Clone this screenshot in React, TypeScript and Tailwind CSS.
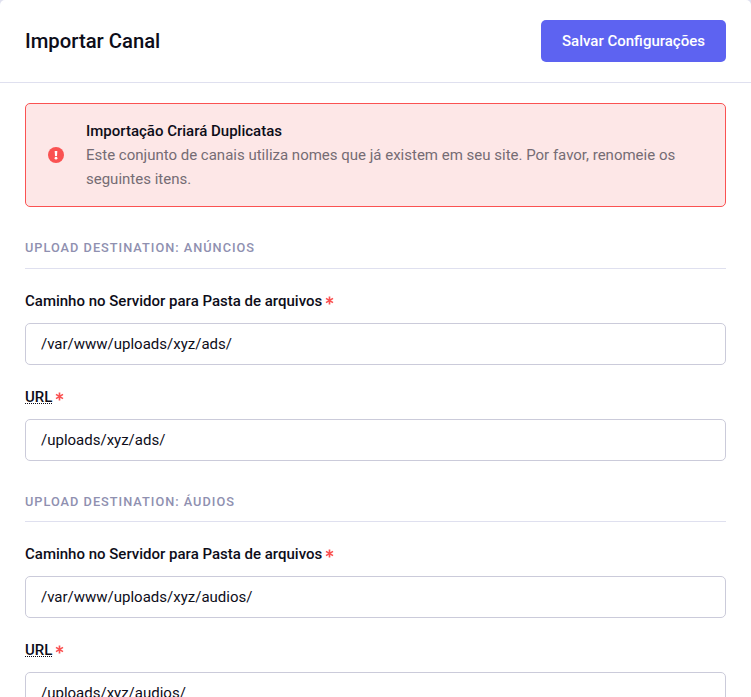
import React from "react";

function Field({ label, value, abbr }: { label: string; value: string; abbr?: boolean }) {
  return (
    <div className="flex flex-col">
      <label className="flex h-6 items-center text-[15px] font-medium leading-6 text-[#0d0d19]">
        {abbr ? (
          <abbr className="h-[14px] border-b border-dotted border-[#0d0d19] leading-[14px]">{label}</abbr>
        ) : (
          label
        )}
        <Star />
      </label>
      <input
        readOnly
        value={value}
        className="mt-[10px] h-[42px] w-full rounded-[5px] border border-[#cbcbda] bg-white px-[15px] text-[15px] text-[#0d0d19] outline-none"
      />
    </div>
  );
}

function Star() {
  return (
    <svg viewBox="0 0 9 9" className="-mt-px ml-[3px] h-[9px] w-[9px]" stroke="#fa5252" strokeWidth="1.65">
      <path d="M4.5 .6v7.8M1 2.4l7 4.2M8 2.4L1 6.6" />
    </svg>
  );
}

function Section({ title, path, url }: { title: string; path: string; url: string }) {
  return (
    <section>
      <h2 className="flex h-[41.6px] items-center border-b border-[#dfe0ef] pt-[0.8px] text-[12.75px] font-medium uppercase tracking-[1px] text-[#8f90b0]">
        {title}
      </h2>
      <div className="mt-5 flex flex-col gap-5">
        <Field label="Caminho no Servidor para Pasta de arquivos" value={path} />
        <Field label="URL" value={url} abbr />
      </div>
    </section>
  );
}

export default function App() {
  return (
    <div className="h-[697px] overflow-hidden bg-[#dfe0ef] font-[Roboto,sans-serif]">
      <div className="h-full rounded-t-[5px] bg-white">
        <header className="flex h-[83px] items-center justify-between border-b border-[#dfe0ef] px-[25px]">
          <h1 className="text-[20.25px] font-medium text-[#0d0d19]">Importar Canal</h1>
          <button className="h-[42px] w-[185px] rounded-[5px] bg-[#5d63f1] text-[15px] font-medium text-white">
            Salvar Configurações
          </button>
        </header>
        <main className="px-[25px] pt-5">
          <div className="flex h-[104px] items-center rounded-[5px] border border-[#fa5252] bg-[#fde7e7] text-[15px] leading-6">
            <div className="flex w-[60px] justify-center">
              <svg viewBox="0 0 16 16" className="h-4 w-4">
                <circle cx="8" cy="8" r="8" fill="#fa5252" />
                <path d="M6.7 4h2.6L9 9H7z" fill="#fff" />
                <circle cx="8" cy="11.2" r="1.4" fill="#fff" />
              </svg>
            </div>
            <div className="flex-1 pr-5">
              <p className="font-medium text-[#0d0d19]">Importação Criará Duplicatas</p>
              <p className="text-[#756c74]">
                Este conjunto de canais utiliza nomes que já existem em seu site. Por favor, renomeie os seguintes itens.
              </p>
            </div>
          </div>
          <div className="mt-5 flex flex-col gap-5">
            <Section title="Upload Destination: Anúncios" path="/var/www/uploads/xyz/ads/" url="/uploads/xyz/ads/" />
            <Section title="Upload Destination: Áudios" path="/var/www/uploads/xyz/audios/" url="/uploads/xyz/audios/" />
          </div>
        </main>
      </div>
    </div>
  );
}
